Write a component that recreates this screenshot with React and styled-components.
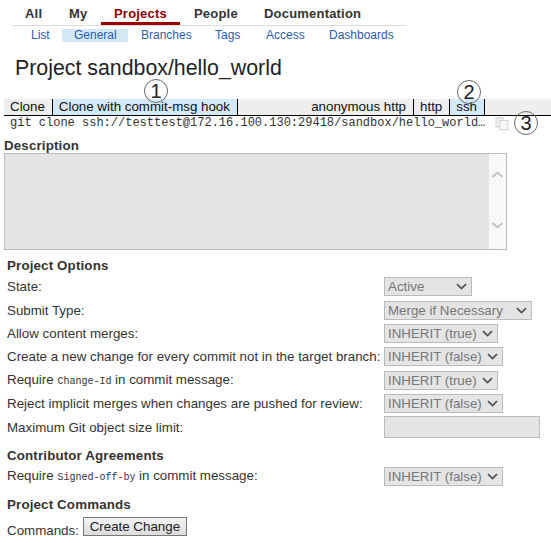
import React from "react";
import styled, { createGlobalStyle } from "styled-components";

const GlobalStyle = createGlobalStyle`
	html, body {
		margin: 0;
		padding: 0;
		background: #fff;
	}
	body {
		font-family: "Liberation Sans", Arial, sans-serif;
		font-size: 13.33px;
		color: #222;
	}
`;

const Page = styled.div`
	position: relative;
	width: 551px;
	height: 543px;
	overflow: hidden;
`;

const TopMenu = styled.div`
	display: flex;
	height: 25px;
	width: 394px;
	margin-left: 12px;
	border-bottom: 1px solid #ddd;
`;

const TopItem = styled.a`
	box-sizing: border-box;
	width: ${(props) => props.$w}px;
	height: 25px;
	padding: 6px 0 0 ${(props) => props.$pad}px;
	font-size: 13px;
	line-height: 16px;
	font-weight: bold;
	letter-spacing: 0.2px;
	color: ${(props) => (props.$active ? "#8b0000" : "#333")};
	border-bottom: ${(props) => (props.$active ? "3px solid #990000" : "none")};
`;

const SubMenu = styled.div`
	display: flex;
	height: 13px;
	margin: 3px 0 0 0;
	padding-left: 62px;
	position: relative;
`;

const SubList = styled.a`
	font-size: 12px;
	line-height: 13px;
	color: #2a5db0;
	position: absolute;
	left: 31px;
`;

const SubItem = styled.a`
	box-sizing: border-box;
	width: ${(props) => props.$w}px;
	padding-left: ${(props) => props.$pad}px;
	font-size: 12px;
	line-height: 13px;
	color: #2a5db0;
	background: ${(props) => (props.$active ? "#d4e9f7" : "transparent")};
`;

const Title = styled.h1`
	margin: 14px 0 0 15px;
	height: 43px;
	font-size: 21.33px;
	line-height: 24px;
	font-weight: normal;
	color: #222;
`;

const DownloadBar = styled.div`
	display: flex;
	justify-content: space-between;
	box-sizing: border-box;
	height: 17px;
	margin-left: 4px;
	background: #eee;
	border-bottom: 1px solid #000;
`;

const TabGroup = styled.div`
	display: flex;
	margin-right: ${(props) => props.$right || 0}px;
`;

const Tab = styled.a`
	box-sizing: border-box;
	height: 16px;
	padding: 0 7px 0 6px;
	font-size: 13.33px;
	line-height: 16px;
	color: #111;
	background: ${(props) => (props.$active ? "#d4e9f7" : "transparent")};
	border-right: 1px solid #000;
`;

const CommandRow = styled.div`
	display: flex;
	align-items: center;
	height: 14px;
	margin: 0 0 0 10px;
`;

const CommandText = styled.span`
	width: 485px;
	font-family: "Liberation Mono", "Courier New", monospace;
	font-size: 12px;
	line-height: 14px;
	color: #333;
	white-space: nowrap;
`;

const CopyIcon = styled.svg`
	width: 15px;
	height: 14px;
	flex: none;
`;

const SectionTitle = styled.div`
	margin: ${(props) => props.$top}px 0 0 ${(props) => props.$left || 7}px;
	font-size: 13.33px;
	line-height: 15px;
	font-weight: bold;
	letter-spacing: 0.15px;
	color: #333;
`;

const DescriptionBox = styled.div`
	display: flex;
	justify-content: flex-end;
	box-sizing: border-box;
	width: 503px;
	height: 97px;
	margin: 0 0 0 4px;
	background: #e4e4e4;
	border: 1px solid #bbb;
`;

const ScrollBar = styled.div`
	display: flex;
	flex-direction: column;
	justify-content: space-between;
	align-items: center;
	box-sizing: border-box;
	width: 17px;
	padding: 17px 0 20px;
	background: #f8f8f8;
`;

const OptionRow = styled.div`
	display: flex;
	align-items: center;
	height: ${(props) => props.$h || 23.4}px;
	margin-top: ${(props) => props.$top || 0}px;
	padding-left: 7px;
`;

const Label = styled.div`
	width: 377px;
	flex: none;
	font-size: 13.33px;
	line-height: 15px;
	color: #333;
	white-space: nowrap;
`;

const Code = styled.code`
	font-family: "Liberation Mono", "Courier New", monospace;
	font-size: 10px;
	color: #333;
`;

const SelectBox = styled.div`
	display: flex;
	align-items: center;
	justify-content: space-between;
	box-sizing: border-box;
	width: ${(props) => props.$w}px;
	height: 19px;
	padding: 0 4px 0 3px;
	background: #e4e4e4;
	border: 1px solid #bbb;
	font-size: 13.33px;
	color: #777;
	white-space: nowrap;
`;

const Chevron = styled.svg`
	width: 11px;
	height: 7px;
	flex: none;
`;

const TextBox = styled.div`
	box-sizing: border-box;
	width: 156px;
	height: 22px;
	background: #e4e4e4;
	border: 1px solid #bbb;
`;

const CommandsRow = styled.div`
	display: flex;
	align-items: flex-end;
	margin: 5px 0 0 7px;
	font-size: 13.33px;
	line-height: 15px;
	color: #333;
`;

const Button = styled.button`
	box-sizing: border-box;
	width: 104px;
	height: 19px;
	margin: 0 0 2px 4px;
	padding: 0;
	background: linear-gradient(#f4f4f4, #dcdcdc);
	border: 1px solid #777;
	border-radius: 0;
	font-family: "Liberation Sans", Arial, sans-serif;
	font-size: 13.33px;
	line-height: 15px;
	color: #222;
`;

const Callout = styled.span`
	position: absolute;
	left: ${(props) => props.$x}px;
	top: ${(props) => props.$y}px;
	display: flex;
	align-items: center;
	justify-content: center;
	box-sizing: border-box;
	width: 24px;
	height: 24px;
	border: 1.5px solid #666;
	border-radius: 50%;
	font-size: 20px;
	line-height: 20px;
	color: #222;
`;

const menuItems = [
	{ label: "All", w: 45, pad: 13 },
	{ label: "My", w: 44, pad: 12 },
	{ label: "Projects", w: 79, pad: 13, active: true },
	{ label: "People", w: 70, pad: 14 },
	{ label: "Documentation", w: 120, pad: 14 },
];

const subItems = [
	{ label: "General", w: 66, pad: 12, active: true },
	{ label: "Branches", w: 79, pad: 13 },
	{ label: "Tags", w: 51, pad: 8 },
	{ label: "Access", w: 63, pad: 8 },
	{ label: "Dashboards", w: 80, pad: 8 },
];

const Down = () => (
	<Chevron viewBox="0 0 11 7">
		<path d="M1 1.2 L5.5 5.6 L10 1.2" fill="none" stroke="#555" strokeWidth="1.8" />
	</Chevron>
);

const Select = ({ w, value }) => (
	<SelectBox $w={w}>
		{value}
		<Down />
	</SelectBox>
);

const App = () => (
	<Page>
		<GlobalStyle />
		<TopMenu>
			{menuItems.map((item) => (
				<TopItem key={item.label} $w={item.w} $pad={item.pad} $active={item.active}>
					{item.label}
				</TopItem>
			))}
		</TopMenu>
		<SubMenu>
			<SubList>List</SubList>
			{subItems.map((item) => (
				<SubItem key={item.label} $w={item.w} $pad={item.pad} $active={item.active}>
					{item.label}
				</SubItem>
			))}
		</SubMenu>
		<Title>Project sandbox/hello_world</Title>
		<DownloadBar>
			<TabGroup>
				<Tab>Clone</Tab>
				<Tab $active>Clone with commit-msg hook</Tab>
			</TabGroup>
			<TabGroup $right={66}>
				<Tab>anonymous http</Tab>
				<Tab>http</Tab>
				<Tab $active>ssh</Tab>
			</TabGroup>
		</DownloadBar>
		<CommandRow>
			<CommandText>git clone ssh://testtest@172.16.100.130:29418/sandbox/hello_world…</CommandText>
			<CopyIcon viewBox="0 0 15 14">
				<path d="M1 1.5 H8 V11 H1 Z" fill="#eee" stroke="#d4d4d4" />
				<path d="M5 4.5 H13 V13.5 H5 Z" fill="#f6f6f6" stroke="#d4d4d4" />
			</CopyIcon>
		</CommandRow>
		<SectionTitle $top={8} $left={4}>Description</SectionTitle>
		<DescriptionBox>
			<ScrollBar>
				<Chevron viewBox="0 0 11 7">
					<path d="M0.5 6 L5.5 1.5 L10.5 6" fill="none" stroke="#c4c4c4" strokeWidth="2" />
				</Chevron>
				<Chevron viewBox="0 0 11 7">
					<path d="M0.5 1 L5.5 5.5 L10.5 1" fill="none" stroke="#c4c4c4" strokeWidth="2" />
				</Chevron>
			</ScrollBar>
		</DescriptionBox>
		<SectionTitle $top={8}>Project Options</SectionTitle>
		<OptionRow $top={2}>
			<Label>State:</Label>
			<Select w={88} value="Active" />
		</OptionRow>
		<OptionRow>
			<Label>Submit Type:</Label>
			<Select w={148} value="Merge if Necessary" />
		</OptionRow>
		<OptionRow>
			<Label>Allow content merges:</Label>
			<Select w={114} value="INHERIT (true)" />
		</OptionRow>
		<OptionRow>
			<Label>Create a new change for every commit not in the target branch:</Label>
			<Select w={119} value="INHERIT (false)" />
		</OptionRow>
		<OptionRow>
			<Label>
				Require <Code>Change-Id</Code> in commit message:
			</Label>
			<Select w={114} value="INHERIT (true)" />
		</OptionRow>
		<OptionRow>
			<Label>Reject implicit merges when changes are pushed for review:</Label>
			<Select w={119} value="INHERIT (false)" />
		</OptionRow>
		<OptionRow>
			<Label>Maximum Git object size limit:</Label>
			<TextBox />
		</OptionRow>
		<SectionTitle $top={9}>Contributor Agreements</SectionTitle>
		<OptionRow $h={22} $top={3}>
			<Label>
				Require <Code>Signed-off-by</Code> in commit message:
			</Label>
			<Select w={119} value="INHERIT (false)" />
		</OptionRow>
		<SectionTitle $top={9}>Project Commands</SectionTitle>
		<CommandsRow>
			Commands:
			<Button>Create Change</Button>
		</CommandsRow>
		<Callout $x={144} $y={79}>1</Callout>
		<Callout $x={457} $y={80}>2</Callout>
		<Callout $x={514} $y={111}>3</Callout>
	</Page>
);

export default App;
